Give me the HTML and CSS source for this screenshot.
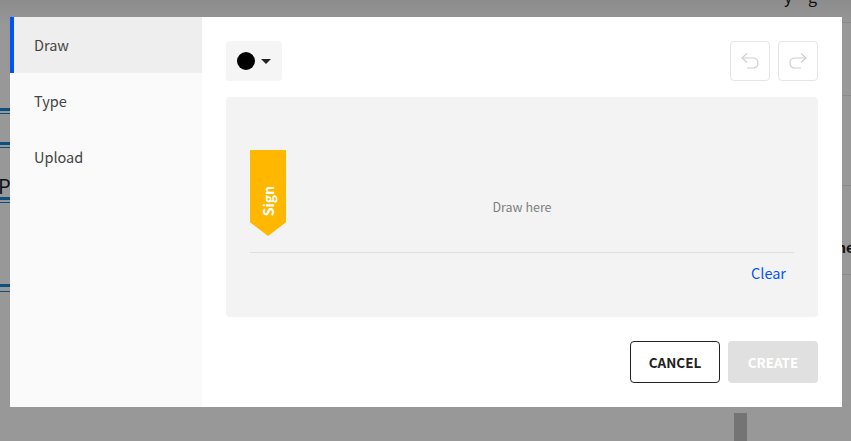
FILE: index.html
```html
<!DOCTYPE html>
<html lang="en">
<head>
    <meta charset="UTF-8">
    <meta name="viewport" content="width=device-width, initial-scale=1.0">
    <title>Create signature</title>
    <link rel="stylesheet" href="styles.css">
</head>
<body>
    <!-- page behind the dialog, only the edges show -->
    <div class="backdrop">
        <div class="bg-rule rule-1"></div>
        <div class="bg-rule rule-2"></div>
        <div class="bg-rule rule-3"></div>
        <div class="bg-rule rule-4"></div>
        <span class="bg-text bg-letter">P</span>
        <span class="bg-text bg-top">y g</span>
        <span class="bg-text bg-side">ne</span>
        <div class="bg-line line-1"></div>
        <div class="bg-line line-2"></div>
        <div class="bg-line line-3"></div>
        <div class="bg-line line-4"></div>
        <div class="bg-bar"></div>
    </div>

    <div class="modal">
        <nav class="tabs">
            <div class="tab active">Draw</div>
            <div class="tab">Type</div>
            <div class="tab">Upload</div>
        </nav>
        <div class="panel">
            <div class="toolbar">
                <button class="color-btn" type="button">
                    <span class="dot"></span>
                    <span class="caret"></span>
                </button>
                <div class="history">
                    <button class="icon-btn" type="button">
                        <svg width="20" height="20" viewBox="0 0 20 20" fill="none" stroke="#cfcfcf" stroke-width="1.2">
                            <path d="M7 2.5 L2 7 L7 11.5"/>
                            <path d="M2 7 H13 C16 7 18 9 18 12 C18 15 16 17 13 17 H7"/>
                        </svg>
                    </button>
                    <button class="icon-btn" type="button">
                        <svg width="20" height="20" viewBox="0 0 20 20" fill="none" stroke="#cfcfcf" stroke-width="1.2">
                            <path d="M13 2.5 L18 7 L13 11.5"/>
                            <path d="M18 7 H7 C4 7 2 9 2 12 C2 15 4 17 7 17 H13"/>
                        </svg>
                    </button>
                </div>
            </div>
            <div class="canvas">
                <div class="sign-area">
                    <div class="flag"><span>Sign</span></div>
                    <div class="hint">Draw here</div>
                </div>
                <div class="clear-row"><a class="clear" href="#">Clear</a></div>
            </div>
            <div class="actions">
                <button class="btn btn-cancel" type="button">CANCEL</button>
                <button class="btn btn-create" type="button">CREATE</button>
            </div>
        </div>
    </div>
</body>
</html>
```

FILE: styles.css
```css
* {
    box-sizing: border-box;
}
html, body {
    height: 100%;
}
body {
    margin: 0;
    overflow: hidden;
    font-family: "Noto Sans CJK KR", "Noto Sans", sans-serif;
    color: #333;
}
.backdrop {
    position: fixed;
    top: 0;
    left: 0;
    width: 100%;
    height: 100%;
    overflow: hidden;
    background: linear-gradient(#8c8c8c, #989898 26px);
}
.bg-rule {
    position: absolute;
    left: 0;
    width: 14px;
    height: 6px;
    border-top: 3px solid #0f4f80;
    border-bottom: 1px solid #0f4f80;
}
.rule-1 {
    top: 108px;
}
.rule-2 {
    top: 142px;
}
.rule-3 {
    top: 197px;
}
.rule-4 {
    top: 284px;
    height: 8px;
}
.bg-line {
    position: absolute;
    right: 0;
    width: 12px;
    height: 1px;
    background: #8a8a8a;
}
.line-1 {
    top: 22px;
}
.line-2 {
    top: 95px;
}
.line-3 {
    top: 185px;
}
.line-4 {
    top: 274px;
}
.bg-text {
    position: absolute;
    font-size: 16px;
    line-height: 20px;
    color: #111;
}
.bg-letter {
    left: -2px;
    top: 174px;
    font-size: 20px;
    line-height: 24px;
}
.bg-top {
    left: 784px;
    top: -14px;
    letter-spacing: 6px;
}
.bg-side {
    left: 837px;
    top: 237px;
    font-size: 14px;
    font-weight: 700;
}
.bg-bar {
    position: absolute;
    left: 734px;
    top: 413px;
    width: 13px;
    height: 28px;
    background: #747474;
}
.modal {
    position: relative;
    display: flex;
    width: 832px;
    height: 390px;
    margin: 17px 0 0 10px;
    background: #fff;
}
.tabs {
    width: 192px;
    background: #fafafa;
}
.tab {
    height: 56px;
    padding-left: 24px;
    font-size: 14.5px;
    line-height: 56px;
    color: #444;
}
.tab.active {
    padding-left: 20px;
    border-left: 4px solid #0052ff;
    background: #eee;
}
.panel {
    flex: 1;
    padding: 24px;
}
.toolbar {
    display: flex;
    justify-content: space-between;
    height: 40px;
    margin-bottom: 16px;
}
.color-btn {
    display: flex;
    align-items: center;
    gap: 6px;
    width: 56px;
    height: 40px;
    padding: 0 0 0 11px;
    border: none;
    border-radius: 4px;
    background: #f5f5f5;
}
.dot {
    width: 18px;
    height: 18px;
    border-radius: 50%;
    background: #000;
}
.caret {
    width: 0;
    height: 0;
    border-left: 5px solid transparent;
    border-right: 5px solid transparent;
    border-top: 5px solid #222;
}
.history {
    display: flex;
    gap: 8px;
}
.icon-btn {
    display: flex;
    align-items: center;
    justify-content: center;
    width: 40px;
    height: 40px;
    padding: 0;
    border: 1px solid #e6e6e6;
    border-radius: 4px;
    background: #fff;
}
.canvas {
    height: 220px;
    padding: 0 24px;
    border-radius: 4px;
    background: #f3f3f3;
}
.sign-area {
    display: flex;
    align-items: flex-end;
    height: 156px;
    padding-bottom: 16px;
    border-bottom: 1px solid #ddd;
}
.flag {
    display: flex;
    justify-content: center;
    align-items: flex-end;
    flex: none;
    width: 36px;
    height: 86px;
    padding-bottom: 20px;
    background: #ffb700;
    clip-path: polygon(0 0, 100% 0, 100% 84%, 50% 100%, 0 84%);
}
.flag span {
    writing-mode: vertical-rl;
    transform: rotate(180deg);
    font-size: 14px;
    font-weight: 700;
    line-height: 18px;
    color: #fff;
}
.hint {
    flex: 1;
    padding: 0 36px 20px 0;
    font-size: 12.5px;
    line-height: 18px;
    text-align: center;
    color: #808080;
}
.clear-row {
    padding: 7px 8px 0 0;
    text-align: right;
}
.clear {
    font-size: 14.5px;
    line-height: 22px;
    color: #0052ff;
    text-decoration: none;
}
.actions {
    display: flex;
    justify-content: flex-end;
    gap: 8px;
    margin-top: 24px;
}
.btn {
    width: 90px;
    height: 42px;
    border-radius: 4px;
    font-family: inherit;
    font-size: 13.5px;
    font-weight: 700;
}
.btn-cancel {
    border: 1px solid #222;
    background: #fff;
    color: #222;
}
.btn-create {
    border: none;
    background: #e0e0e0;
    color: #fff;
}
```
